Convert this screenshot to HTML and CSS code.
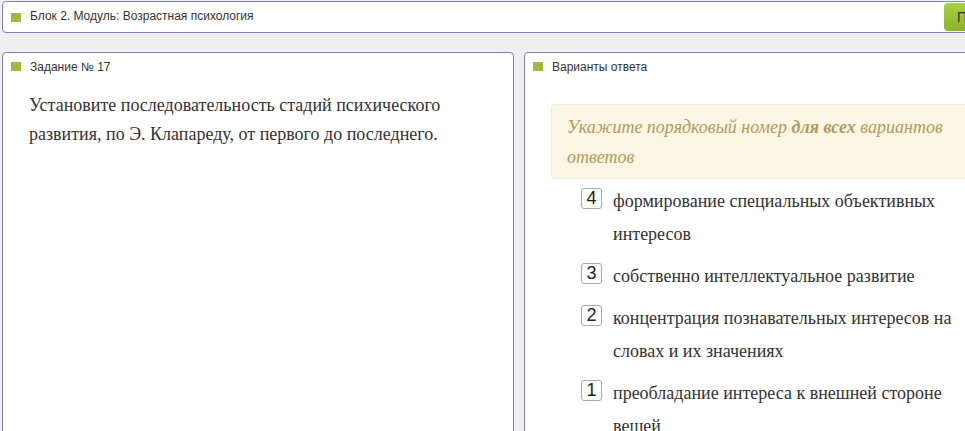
FILE: index.html
```html
<!DOCTYPE html>
<html>

<head lang="ru">
    <meta charset="UTF-8">
    <title>Задание № 17</title>
    <link rel="stylesheet" href="styles.css">
</head>

<body>
    <div class="page">
        <!-- верхняя строка с названием модуля -->
        <div class="top-bar">
            <span class="marker"></span>
            <span class="top-title">Блок 2. Модуль: Возрастная психология</span>
            <a class="next-btn" href="javascript:;">Пропустить</a>
        </div>

        <div class="columns">
            <!-- задание -->
            <div class="panel panel-task">
                <div class="panel-head"><span class="marker"></span>Задание № 17</div>
                <div class="task-text">
                    Установите последовательность стадий психического развития, по Э. Клапареду, от первого до последнего.
                </div>
            </div>

            <!-- варианты ответа -->
            <div class="panel panel-answers">
                <div class="panel-head"><span class="marker"></span>Варианты ответа</div>
                <div class="hint">
                    Укажите порядковый номер <b>для всех</b> вариантов ответов
                </div>
                <ul class="options">
                    <li class="option">
                        <span class="num">4</span>
                        <span class="option-text">формирование специальных объективных интересов</span>
                    </li>
                    <li class="option">
                        <span class="num">3</span>
                        <span class="option-text">собственно интеллектуальное развитие</span>
                    </li>
                    <li class="option">
                        <span class="num">2</span>
                        <span class="option-text">концентрация познавательных интересов на словах и их значениях</span>
                    </li>
                    <li class="option">
                        <span class="num">1</span>
                        <span class="option-text">преобладание интереса к внешней стороне вещей</span>
                    </li>
                </ul>
            </div>
        </div>
    </div>
</body>

</html>
```

FILE: styles.css
```css
/* общий фон страницы */
body {
    margin: 0;
    background: #efefef;
    font-family: Arial, "Liberation Sans", sans-serif;
    color: #333333;
    overflow: hidden;
}

ul,
li {
    margin: 0;
    padding: 0;
    list-style: none;
}

.page {
    padding: 1px 0 0 2px;
    width: 1100px;
}

/* зелёный квадратик перед заголовком */
.marker {
    display: inline-block;
    width: 10px;
    height: 9px;
    background: #a1b93c;
    margin-right: 9px;
    flex: none;
}

/* верхняя строка */
.top-bar {
    display: flex;
    align-items: center;
    width: 1030px;
    height: 30px;
    padding-left: 8px;
    border: 1px solid #7d81b9;
    border-radius: 4px;
    background: #ffffff;
    font-size: 12px;
    box-sizing: content-box;
}

.top-title {
    flex: 1;
    margin-top: -3px;
}

/* кнопка справа, обрезана краем окна */
.next-btn {
    display: block;
    width: 80px;
    height: 28px;
    line-height: 28px;
    padding-left: 13px;
    margin-right: 4px;
    border-radius: 4px;
    background: linear-gradient(#a9cf43, #8cb22a);
    color: #333333;
    font-size: 14px;
    text-decoration: none;
}

/* две колонки */
.columns {
    display: flex;
    gap: 10px;
    margin-top: 19px;
}

.panel {
    flex: 0 0 510px;
    height: 400px;
    border: 1px solid #7d81b9;
    border-radius: 4px;
    background: #ffffff;
}

.panel-head {
    display: flex;
    align-items: center;
    height: 15px;
    padding: 6px 0 0 8px;
    font-size: 12px;
}

/* текст задания */
.task-text {
    padding: 17px 26px 0 26px;
    font-family: "Liberation Serif", "Times New Roman", serif;
    font-size: 18px;
    line-height: 29px;
}

/* подсказка */
.hint {
    margin: 30px 26px 0 26px;
    padding: 7px 15px 6px 15px;
    background: #fcf7e5;
    border: 1px solid #f5eed6;
    border-radius: 3px;
    color: #b5975c;
    font-family: "Liberation Serif", "Times New Roman", serif;
    font-style: italic;
    font-size: 18px;
    line-height: 30px;
}

/* список вариантов */
.options {
    padding: 6px 0 0 56px;
    width: 420px;
}

.option {
    display: flex;
    align-items: flex-start;
    margin-bottom: 9px;
}

.num {
    flex: none;
    width: 19px;
    height: 19px;
    margin-top: 3px;
    margin-right: 11px;
    border: 1px solid #a8a8a8;
    border-radius: 3px;
    text-align: center;
    line-height: 19px;
    font-size: 18px;
    color: #222222;
}

.option-text {
    width: 355px;
    font-family: "Liberation Serif", "Times New Roman", serif;
    font-size: 18px;
    line-height: 33px;
}
```
